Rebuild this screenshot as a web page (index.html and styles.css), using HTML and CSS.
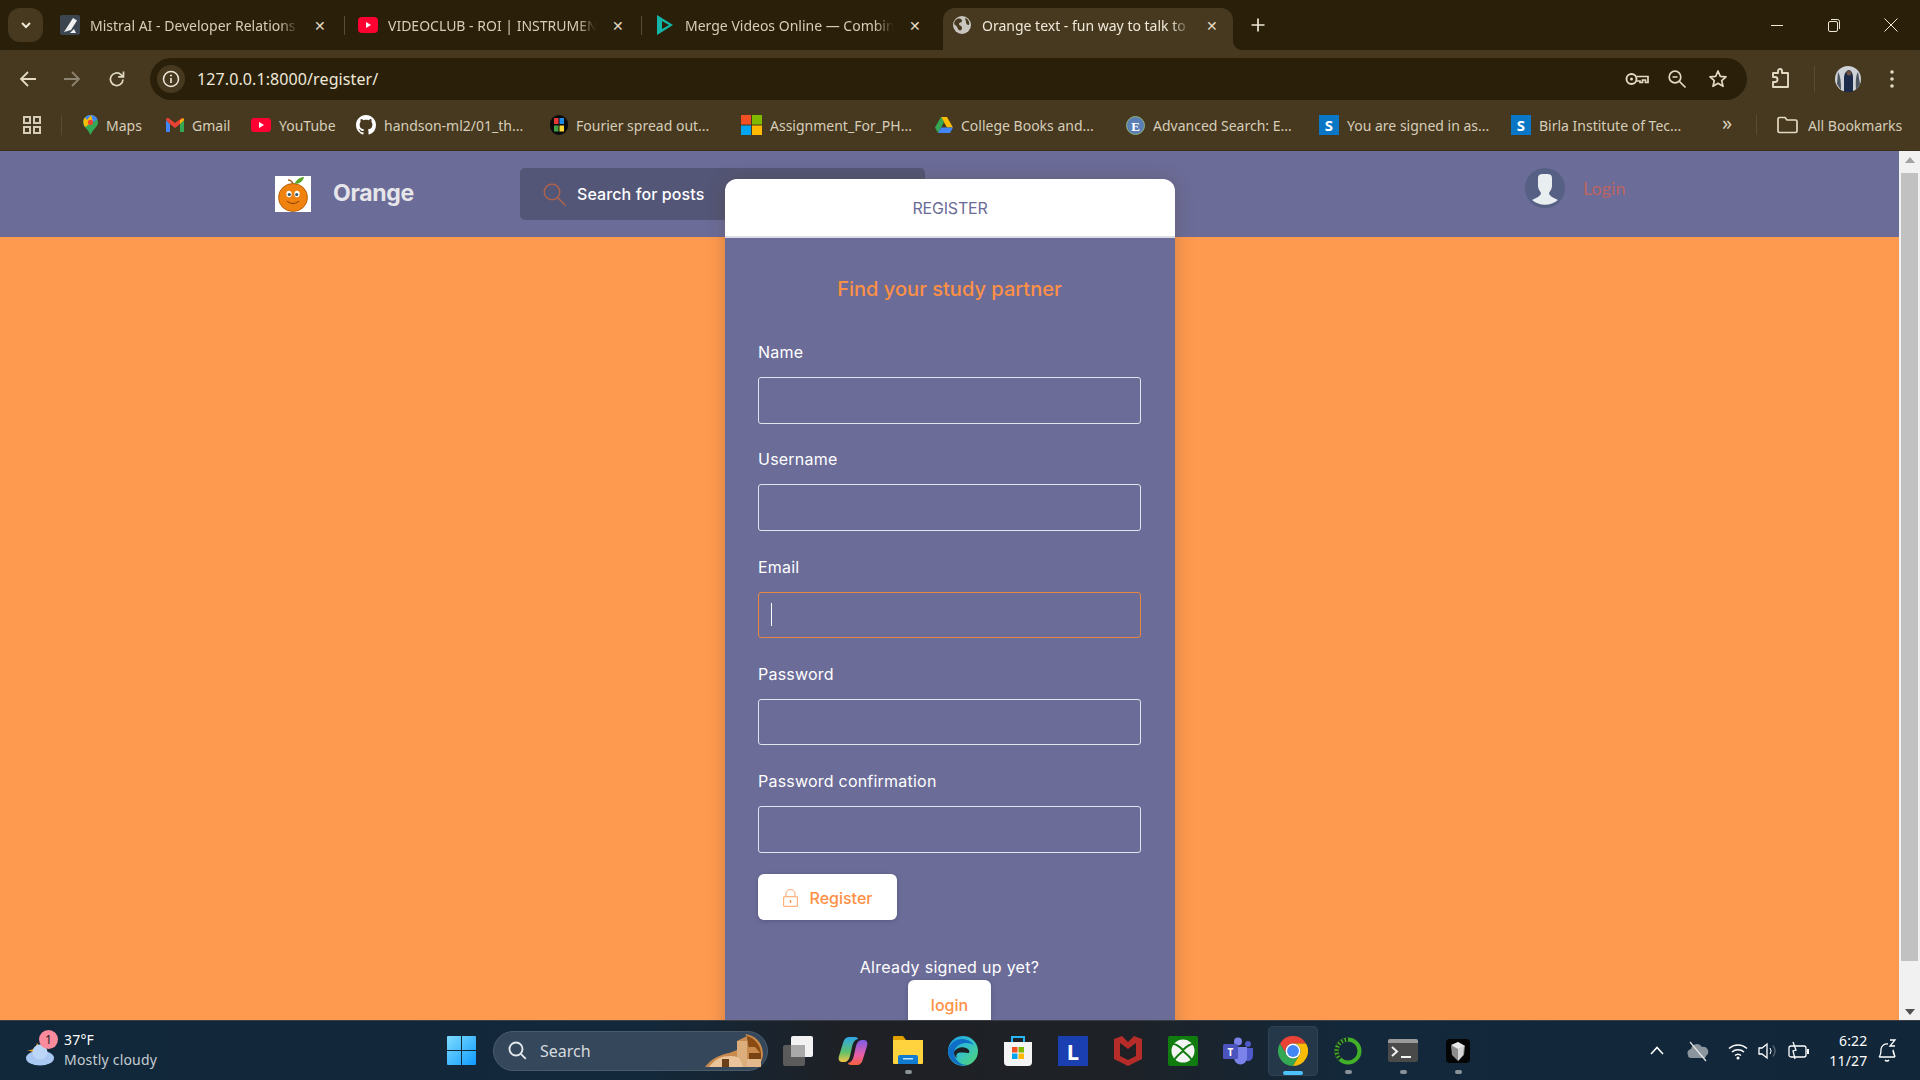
FILE: index.html
```html
<!DOCTYPE html>
<html lang="en">
<head>
<meta charset="utf-8">
<title>Orange text - fun way to talk to</title>
<link rel="stylesheet" href="styles.css">
</head>
<body>
<header class="chrome">
  <div class="tabstrip">
    <div class="tab-search"><svg width="12" height="12" viewBox="0 0 12 12"><path d="M2 4l4 4 4-4" fill="none" stroke="#efe8d8" stroke-width="2"/></svg></div>
    <div class="tab">
      <svg class="fav" width="20" height="20" viewBox="0 0 20 20"><rect width="20" height="20" rx="2" fill="#3b4651"/><path d="M4 17 13 3l4 2.500-6 9.500z" fill="#f1f1f1"/><path d="M10 18h6l-2-4z" fill="#f1f1f1"/></svg>
      <span class="tab-title">Mistral AI - Developer Relations</span>
      <span class="tab-x">✕</span>
    </div>
    <div class="tab tab-sep">
      <svg class="fav" width="20" height="20" viewBox="0 0 20 20"><rect y="2" width="20" height="16" rx="4" fill="#ff0033"/><path d="M8 7l5 3-5 3z" fill="#fff"/></svg>
      <span class="tab-title">VIDEOCLUB - ROI | INSTRUMEN</span>
      <span class="tab-x">✕</span>
    </div>
    <div class="tab tab-sep">
      <svg class="fav" width="20" height="22" viewBox="0 0 20 22"><path d="M2 1l16 10L2 21z" fill="#12b5a6"/><path d="M7 7l7 4-7 4z" fill="#2a200a"/></svg>
      <span class="tab-title">Merge Videos Online — Combin</span>
      <span class="tab-x">✕</span>
    </div>
    <div class="tab tab-active">
      <svg class="fav" width="18" height="18" viewBox="0 0 18 18"><circle cx="9" cy="9" r="9" fill="#c9c6c0"/><path d="M4 3c3-1 5 0 5 2s-3 1-3 3 3 1 3 4-3 3-4 1-1-3-3-4 0-5 2-6zM12 2c3 1 5 4 4 7-2 0-3-1-3-3s-1-2-1-4z" fill="#463920"/></svg>
      <span class="tab-title">Orange text - fun way to talk to</span>
      <span class="tab-x">✕</span>
    </div>
    <svg class="newtab" width="16" height="16" viewBox="0 0 16 16"><path d="M8 1.500v13M1.500 8h13" stroke="#efe8d8" stroke-width="1.700"/></svg>
    <div class="winctl">
      <svg width="14" height="14" viewBox="0 0 14 14"><path d="M1 7.500h12" stroke="#efe8d8"/></svg>
      <svg width="14" height="14" viewBox="0 0 14 14"><rect x="1.500" y="3.500" width="9" height="10" rx="1.500" fill="none" stroke="#efe8d8"/><path d="M4 1.500h6.500a2 2 0 0 1 2 2V11" fill="none" stroke="#efe8d8"/></svg>
      <svg width="14" height="14" viewBox="0 0 14 14"><path d="M.5.500l13 13M13.500.500l-13 13" stroke="#efe8d8"/></svg>
    </div>
  </div>

  <div class="toolbar">
    <div class="tool"><svg width="18" height="18" viewBox="0 0 18 18"><path d="M17 9H2.500M9 2 2 9l7 7" fill="none" stroke="#e3dac4" stroke-width="1.800"/></svg></div>
    <div class="tool"><svg width="18" height="18" viewBox="0 0 18 18"><path d="M1 9h14.500M9 2l7 7-7 7" fill="none" stroke="#8d8371" stroke-width="1.800"/></svg></div>
    <div class="tool tool-wide"><svg width="18" height="18" viewBox="0 0 18 18"><path d="M15 9.500A6.300 6.300 0 1 1 13 4.600L15 6.500M15.500 1.500v5.300h-5.300" fill="none" stroke="#e3dac4" stroke-width="1.700"/></svg></div>
    <div class="omnibox">
      <div class="site-info"><svg width="18" height="18" viewBox="0 0 18 18"><circle cx="9" cy="9" r="7.500" fill="none" stroke="#efe8d8" stroke-width="1.500"/><path d="M9 8v5" stroke="#efe8d8" stroke-width="1.600"/><circle cx="9" cy="5.500" r="1" fill="#efe8d8"/></svg></div>
      <span class="url">127.0.0.1:8000/register/</span>
      <div class="omni-actions">
        <div class="omni-act"><svg width="24" height="18" viewBox="0 0 24 18"><circle cx="6.500" cy="9" r="5" fill="none" stroke="#e3dac4" stroke-width="1.900"/><circle cx="6.500" cy="9" r="1.500" fill="#e3dac4"/><path d="M11.500 6.500h11.500v6h-2.500v-2.500h-3v2.500H15V11h-3.500" fill="none" stroke="#e3dac4" stroke-width="1.700"/></svg></div>
        <div class="omni-act"><svg width="20" height="20" viewBox="0 0 20 20"><circle cx="8" cy="8" r="5.800" fill="none" stroke="#e3dac4" stroke-width="1.700"/><path d="M12.500 12.500l6 6M5.500 8h5" stroke="#e3dac4" stroke-width="1.700"/></svg></div>
        <div class="omni-act"><svg width="20" height="20" viewBox="0 0 20 20"><path d="M10 2l2.300 5.300 5.700.500-4.300 3.800 1.300 5.700-5-3-5 3 1.300-5.700L2 7.800l5.700-.500z" fill="none" stroke="#e3dac4" stroke-width="1.700" stroke-linejoin="round"/></svg></div>
      </div>
    </div>
    <div class="tool tool-ext"><svg width="22" height="22" viewBox="0 0 22 22"><path d="M3 5h5V3a2 2 0 0 1 4 0v2h6v14H3v-5h2a2.500 2.500 0 0 0 0-5H3z" fill="none" stroke="#e3dac4" stroke-width="1.900" stroke-linejoin="round"/></svg></div>
    <span class="tool-sep"></span>
    <div class="avatar-slot"><svg width="26" height="26" viewBox="0 0 26 26"><circle cx="13" cy="13" r="13" fill="#cfd2d6"/><path d="M9 26V12c0-5 3-8 5-8s4 3 4 8v14z" fill="#1c2b4a"/><path d="M3 6c3 4 3 14 3 18L2 18zM23 6c-3 4-2 14-2 18l4-6z" fill="#4c5660"/><circle cx="14" cy="7" r="2.500" fill="#6d5040"/></svg></div>
    <div class="tool"><svg width="4" height="18" viewBox="0 0 4 18"><circle cx="2" cy="2" r="1.800" fill="#e3dac4"/><circle cx="2" cy="9" r="1.800" fill="#e3dac4"/><circle cx="2" cy="16" r="1.800" fill="#e3dac4"/></svg></div>
  </div>

  <nav class="bookmarks">
    <svg width="18" height="18" viewBox="0 0 18 18"><g fill="none" stroke="#d6cdb8" stroke-width="2"><rect x="1" y="1" width="6" height="6"/><rect x="11" y="1" width="6" height="6"/><rect x="1" y="11" width="6" height="6"/><rect x="11" y="11" width="6" height="6"/></g></svg>
    <span class="bm-sep"></span>
    <span class="bm"><svg width="15" height="20" viewBox="0 0 15 20"><path d="M7.500 0C3.400 0 0 3.200 0 7.300 0 12 5 14 7.500 20 10 14 15 12 15 7.300 15 3.200 11.600 0 7.500 0z" fill="#34a853"/><path d="M2 2.500 7.500 0c2 0 5 1 6.500 4L2 12C.5 9-.5 5 2 2.500z" fill="#fbbc04"/><path d="M2 2.500C4 .5 6 0 8 0l-4 5z" fill="#4285f4"/><path d="M8 0c3 0 5 1.500 6.500 4.500L10 7z" fill="#4285f4"/><circle cx="7.500" cy="7.300" r="2.600" fill="#ea4335"/></svg>Maps</span>
    <span class="bm"><svg width="18" height="14" viewBox="0 0 18 14"><path d="M0 2v12h4V6z" fill="#4285f4"/><path d="M18 2v12h-4V6z" fill="#34a853"/><path d="M0 2c0-2 2-2.500 3-1.500L9 5l6-4.500c1-1 3-.5 3 1.500l-4 4-5 4-5-4z" fill="#ea4335"/><path d="M14 6l4-4c0-1-.5-1.500-1-1.700L14 2.500z" fill="#fbbc04"/></svg>Gmail</span>
    <span class="bm"><svg width="20" height="14" viewBox="0 0 20 14"><rect width="20" height="14" rx="3.500" fill="#ff0033"/><path d="M8 4l5 3-5 3z" fill="#fff"/></svg>YouTube</span>
    <span class="bm"><svg width="20" height="20" viewBox="0 0 16 16"><path fill="#fff" d="M8 0C3.580 0 0 3.580 0 8c0 3.540 2.290 6.530 5.470 7.590.4.070.55-.17.55-.38 0-.19-.01-.82-.01-1.490-2.010.37-2.530-.49-2.690-.94-.09-.23-.48-.94-.82-1.130-.28-.15-.68-.52-.01-.53.630-.01 1.080.58 1.230.82.720 1.210 1.870.87 2.330.66.070-.52.280-.87.510-1.070-1.780-.2-3.640-.89-3.640-3.950 0-.87.310-1.590.820-2.150-.08-.2-.36-1.020.08-2.120 0 0 .670-.21 2.200.82.640-.18 1.320-.27 2-.27.680 0 1.360.09 2 .27 1.530-1.040 2.200-.82 2.200-.82.440 1.100.160 1.920.080 2.120.510.560.820 1.270.820 2.150 0 3.070-1.870 3.750-3.650 3.950.29.250.54.730.54 1.480 0 1.070-.01 1.930-.01 2.200 0 .21.150.46.550.38A8.013 8.013 0 0 0 16 8c0-4.420-3.580-8-8-8z"/></svg>handson-ml2/01_th...</span>
    <span class="bm"><svg width="18" height="20" viewBox="0 0 18 20"><rect width="18" height="20" rx="9" fill="#0b0b0b"/><rect x="4" y="3" width="4.500" height="6" fill="#e53935"/><rect x="9.500" y="3" width="4.500" height="6" fill="#1e88e5"/><rect x="4" y="10.500" width="4.500" height="6" fill="#43a047"/><rect x="9.500" y="10.500" width="4.500" height="6" fill="#fdd835"/></svg>Fourier spread out...</span>
    <span class="bm"><svg width="21" height="20" viewBox="0 0 21 20"><rect width="10" height="9.500" fill="#f25022"/><rect x="11" width="10" height="9.500" fill="#7fba00"/><rect y="10.500" width="10" height="9.500" fill="#00a4ef"/><rect x="11" y="10.500" width="10" height="9.500" fill="#ffb900"/></svg>Assignment_For_PH...</span>
    <span class="bm"><svg width="18" height="16" viewBox="0 0 18 16"><path d="M6 0h6l6 10.500h-6z" fill="#fbbc04"/><path d="M6 0l3 5.300L3 16 0 10.500z" fill="#34a853"/><path d="M3 16l3-5.500h12L15 16z" fill="#4285f4"/></svg>College Books and...</span>
    <span class="bm"><span class="bm-e">E</span>Advanced Search: E...</span>
    <span class="bm"><span class="bm-s">S</span>You are signed in as...</span>
    <span class="bm"><span class="bm-s">S</span>Birla Institute of Tec...</span>
    <span class="bm-more">»</span>
    <span class="bm-sep"></span>
    <span class="bm bm-all"><svg width="21" height="18" viewBox="0 0 21 18"><path d="M1 3a1.500 1.500 0 0 1 1.500-1.500H8l2 2.500h8.500A1.500 1.500 0 0 1 20 5.500V15a1.500 1.500 0 0 1-1.500 1.500h-16A1.500 1.500 0 0 1 1 15z" fill="none" stroke="#e3dac4" stroke-width="1.700"/></svg>All Bookmarks</span>
  </nav>
</header>

<div class="viewport">
  <div class="page">
    <div class="site-nav">
      <svg class="logo" width="36" height="36" viewBox="0 0 36 36">
        <rect width="36" height="36" fill="#fff"/>
        <ellipse cx="18" cy="21.500" rx="14.500" ry="14" fill="#f0820f"/>
        <ellipse cx="18" cy="21.500" rx="14.500" ry="14" fill="none" stroke="#a85408" stroke-width=".8"/>
        <path d="M20 7c2-4 6-6 9-6-1 4-4 7-9 7z" fill="#5aa82a"/>
        <path d="M13 4c2 0 4 1 5 4" fill="none" stroke="#a5641e" stroke-width="1.500"/>
        <ellipse cx="14" cy="18" rx="2.600" ry="3.200" fill="#fff"/><ellipse cx="22" cy="18" rx="2.600" ry="3.200" fill="#fff"/>
        <circle cx="14.300" cy="18.500" r="1.600" fill="#24566a"/><circle cx="21.700" cy="18.500" r="1.600" fill="#24566a"/>
        <path d="M12 25c3 3.500 9 3.500 12 0" fill="none" stroke="#8b4208" stroke-width="1.100"/>
      </svg>
      <span class="brand">Orange</span>
      <div class="site-search">
        <svg width="23" height="23" viewBox="0 0 23 23"><circle cx="9" cy="9" r="7.800" fill="none" stroke="#b4644a" stroke-width="1.300"/><path d="M14.500 14.500l8 8" stroke="#b4644a" stroke-width="1.300"/></svg>
        <span>Search for posts</span>
      </div>
      <svg class="user-pic" width="40" height="40" viewBox="0 0 40 40"><circle cx="20" cy="20" r="20" fill="#566084"/><path d="M13 10c0-4 3-4 7-4s7 0 7 4v8c0 3-2 5-3 7 0 3 5 5 9 7a20 20 0 0 1-26 0c4-2 9-4 9-7-1-2-3-4-3-7z" fill="#e9eff0"/></svg>
      <a class="login-link">Login</a>
    </div>

    <main class="card">
      <div class="card-head">REGISTER</div>
      <form class="card-body">
        <h2 class="card-title">Find your study partner</h2>
        <div class="fields">
          <div class="field"><label>Name</label><input type="text"></div>
          <div class="field"><label>Username</label><input type="text"></div>
          <div class="field field-focus"><label>Email</label><input type="text" class="input-focus"></div>
          <div class="field"><label>Password</label><input type="password"></div>
          <div class="field"><label>Password confirmation</label><input type="password"></div>
        </div>
        <div class="btn btn-register">
          <svg width="15" height="18" viewBox="0 0 15 18"><path d="M3 8V5a4.500 4.500 0 0 1 9 0v3" fill="none" stroke="#ffb27e" stroke-width="1.200"/><rect x=".6" y="7.600" width="13.800" height="9.800" rx="1" fill="none" stroke="#ffb27e" stroke-width="1.200"/><rect x="6.800" y="11" width="1.400" height="3" fill="#ff8f45"/></svg>
          Register
        </div>
        <p class="already">Already signed up yet?</p>
        <div class="btn btn-login">login</div>
      </form>
    </main>
  </div>
  <div class="scrollbar">
    <span class="arrow-up"></span>
    <span class="thumb"></span>
    <span class="arrow-down"></span>
  </div>
</div>

<footer class="taskbar">
  <div class="weather">
    <div class="weather-icon">
      <svg width="30" height="30" viewBox="0 0 30 30"><path d="M1 14c5 1 10-1 11-7 3 3 3 8 0 10z" fill="#f0a020"/><ellipse cx="15" cy="22" rx="14" ry="7.500" fill="#a9c8f2"/><circle cx="15" cy="16" r="7.500" fill="#bcd6f7"/></svg>
      <span class="badge">1</span>
    </div>
    <div class="weather-text"><span class="temp">37°F</span><span class="cond">Mostly cloudy</span></div>
  </div>
  <svg class="winlogo" width="29" height="29" viewBox="0 0 29 29"><defs><linearGradient id="wg" x1="0" y1="0" x2="1" y2="1"><stop offset="0" stop-color="#7fdcff"/><stop offset="1" stop-color="#0f9bff"/></linearGradient></defs><path d="M0 1a1 1 0 0 1 1-1h13v14H0zM15 0h13a1 1 0 0 1 1 1v13H15zM0 15h14v14H1a1 1 0 0 1-1-1zM15 15h14v13a1 1 0 0 1-1 1H15z" fill="url(#wg)"/></svg>
  <div class="task-search">
    <svg width="19" height="19" viewBox="0 0 19 19"><circle cx="8" cy="8" r="6.500" fill="none" stroke="#e4e8ec" stroke-width="1.900"/><path d="M12.800 12.800l5 5" stroke="#e4e8ec" stroke-width="1.900"/></svg>
    <span>Search</span>
    <svg class="widget" width="60" height="36" viewBox="0 0 60 36"><path d="M0 34c6-8 14-12 24-14l8-3V8l10-5 2 12c2-6 0-10-4-14 10 1 18 9 18 20 0 6-4 13-8 13z" fill="#c98b4d"/><path d="M42 3c8 2 14 10 14 18L50 14 44 14z" fill="#8a4a12"/><rect x="32" y="8" width="10" height="26" fill="#dcae7c"/><path d="M4 34c6-8 12-11 22-11s10 5 12 11z" fill="#eac49a"/><rect x="17" y="26" width="7" height="8" fill="#6b3f17"/><path d="M44 20h12v14H44z" fill="#7a4313"/><path d="M42 26h14v8H42z" fill="#e3b88c"/></svg>
  </div>
  <div class="apps">
    <div class="app"><svg width="30" height="30" viewBox="0 0 30 30"><rect y="9" width="22" height="21" rx="2" fill="#5b5b5b"/><rect x="8" width="22" height="21" rx="2" fill="#f2f2f2"/><rect x="8" y="9" width="14" height="12" fill="#a9a9a9"/></svg></div>
    <div class="app"><svg width="30" height="30" viewBox="0 0 30 30"><defs><linearGradient id="c1" x1="0" y1="0" x2="0" y2="1"><stop offset="0" stop-color="#2ea7e8"/><stop offset=".6" stop-color="#5ec16a"/><stop offset="1" stop-color="#f6c445"/></linearGradient><linearGradient id="c2" x1="0" y1="0" x2="0" y2="1"><stop offset="0" stop-color="#7c5ce6"/><stop offset=".6" stop-color="#e75fa8"/><stop offset="1" stop-color="#f5603a"/></linearGradient></defs><path d="M11 1h6c2 0 3 1 3 2-4 1-5 4-6 8l-2 9c-1 4-3 6-6 6H4c-3 0-4-3-3-6l4-13c1-4 3-6 6-6z" fill="url(#c1)"/><path d="M19 29h-6c-2 0-3-1-3-2 4-1 5-4 6-8l2-9c1-4 3-6 6-6h2c3 0 4 3 3 6l-4 13c-1 4-3 6-6 6z" fill="url(#c2)"/></svg></div>
    <div class="app"><svg width="30" height="30" viewBox="0 0 30 30"><path d="M0 1a1 1 0 0 1 1-1h9l3 4H0z" fill="#e0a100"/><path d="M0 4h30v23a1 1 0 0 1-1 1H1a1 1 0 0 1-1-1z" fill="#ffd33d"/><path d="M5 21a2 2 0 0 1 2-2h16a2 2 0 0 1 2 2v7H5z" fill="#0f7cd1"/><rect x="10" y="22" width="10" height="1.500" fill="#bfe3ff"/></svg><span class="dot"></span></div>
    <div class="app"><svg width="30" height="30" viewBox="0 0 30 30"><defs><linearGradient id="e1" x1="0" y1="0" x2="1" y2="1"><stop offset="0" stop-color="#1b9de2"/><stop offset=".5" stop-color="#35c1c8"/><stop offset="1" stop-color="#52d66a"/></linearGradient></defs><circle cx="15" cy="15" r="15" fill="url(#e1)"/><path d="M0 15C1 8 7 3 14 3c5 0 9 2 12 6-4-2-10-3-15 0-5 3-6 9-3 14 2 3 6 6 11 6a15 15 0 0 1-19-14z" fill="#0f6fc6"/><path d="M6 16c2-4 8-6 12-4 3 1 4 3 3 5-3 0-8-1-11 0-2 1-2 3-1 5-2-1-3-3-3-6z" fill="#1c2024"/></svg></div>
    <div class="app"><svg width="30" height="30" viewBox="0 0 30 30"><path d="M9 6V1h12v5" fill="none" stroke="#29b6f6" stroke-width="2"/><path d="M1 6h28v20a4 4 0 0 1-4 4H5a4 4 0 0 1-4-4z" fill="#f4f4f4"/><rect x="9" y="11" width="5.500" height="5.500" fill="#f25022"/><rect x="15.500" y="11" width="5.500" height="5.500" fill="#7fba00"/><rect x="9" y="17.500" width="5.500" height="5.500" fill="#00a4ef"/><rect x="15.500" y="17.500" width="5.500" height="5.500" fill="#ffb900"/></svg></div>
    <div class="app"><span class="app-l">L</span></div>
    <div class="app"><svg width="28" height="30" viewBox="0 0 28 30"><path d="M0 3l8-3 6 6 6-6 8 3v20l-14 7-14-7z" fill="#b62c29"/><path d="M6 7l8 6 8-6v13l-8 4-8-4z" fill="#1e2024"/></svg></div>
    <div class="app"><svg width="30" height="30" viewBox="0 0 30 30"><rect width="30" height="30" rx="2" fill="#107c10"/><circle cx="15" cy="15" r="11.500" fill="#f4f4f4"/><path d="M5 8c4 0 7 3 10 6 3-3 6-6 10-6M6 25c1-4 6-7 9-10 3 3 8 6 9 10" fill="none" stroke="#107c10" stroke-width="2"/></svg></div>
    <div class="app"><svg width="30" height="28" viewBox="0 0 30 28"><circle cx="15" cy="4.500" r="4" fill="#7b83eb"/><circle cx="25" cy="7" r="3" fill="#5059c9"/><path d="M19 11h11v8a5 5 0 0 1-8 4z" fill="#5059c9"/><path d="M10 10h14v11a6.500 6.500 0 0 1-13 0z" fill="#7b83eb"/><rect y="7" width="15" height="15" rx="1.500" fill="#4b53bc"/><text x="7.500" y="19" class="teams-t">T</text></svg></div>
    <div class="app app-active"><svg width="30" height="30" viewBox="0 0 48 48"><path d="M24 12h20.800A24 24 0 0 0 3.200 12l10.400 18A12 12 0 0 1 24 12z" fill="#ea4335"/><path d="M13.600 30 3.200 12A24 24 0 0 0 24 48l10.400-18a12 12 0 0 1-20.800 0z" fill="#34a853"/><path d="M34.400 30 24 48A24 24 0 0 0 44.800 12H24a12 12 0 0 1 10.400 18z" fill="#fbbc04"/><circle cx="24" cy="24" r="12" fill="#fff"/><circle cx="24" cy="24" r="9.500" fill="#4285f4"/></svg><span class="bar"></span></div>
    <div class="app"><svg width="28" height="28" viewBox="0 0 28 28"><circle cx="14" cy="14" r="11.500" fill="none" stroke="#43b02a" stroke-width="4"/><path d="M14 2.500A11.500 11.500 0 0 0 7 23" fill="none" stroke="#1e2a24" stroke-width="4" stroke-dasharray="2 1.500"/></svg><span class="dot"></span></div>
    <div class="app"><svg width="30" height="23" viewBox="0 0 30 23"><rect width="30" height="23" rx="2" fill="#4a4a4a"/><path d="M0 2a2 2 0 0 1 2-2h26a2 2 0 0 1 2 2v2H0z" fill="#9a9a9a"/><path d="M4 8l5 4.500-5 4.500" fill="none" stroke="#f2f2f2" stroke-width="2"/><rect x="13" y="17" width="10" height="2" fill="#f2f2f2"/></svg><span class="dot"></span></div>
    <div class="app"><svg width="24" height="24" viewBox="0 0 24 24"><rect width="24" height="24" rx="4" fill="#050505"/><path d="M12 3l7 4-1 9-6 6-6-6-1-9z" fill="#8c8c8c"/><path d="M12 3l7 4-7 3-7-4z" fill="#e8e8e8"/><path d="M12 10l6-3-1 9-5 6z" fill="#d6d6d6"/></svg><span class="dot"></span></div>
  </div>
  <div class="tray">
    <svg width="14" height="9" viewBox="0 0 14 9"><path d="M1 8l6-6.500L13 8" fill="none" stroke="#fff" stroke-width="1.600"/></svg>
    <svg class="tray-cloud" width="22" height="22" viewBox="0 0 22 22"><path d="M1 15a4 4 0 0 1 3-6 6 6 0 0 1 11-2 5 5 0 0 1 4 9l-1 2H4a3 3 0 0 1-3-3z" fill="#8a959e"/><path d="M3 2l16 19" stroke="#e8e8e8" stroke-width="1.200"/></svg>
    <svg class="tray-wifi" width="20" height="18" viewBox="0 0 20 18"><g fill="none" stroke="#fff" stroke-width="1.500"><path d="M1 6.500a13 13 0 0 1 18 0"/><path d="M4 10a9 9 0 0 1 12 0"/><path d="M7 13.500a4.500 4.500 0 0 1 6 0"/></g><circle cx="10" cy="16" r="1.500" fill="#fff"/></svg>
    <svg class="tray-vol" width="20" height="18" viewBox="0 0 20 18"><path d="M1 6h3l5-4v14l-5-4H1z" fill="none" stroke="#fff" stroke-width="1.300"/><path d="M12 6a5 5 0 0 1 0 6" fill="none" stroke="#fff"/><path d="M15 3.500a9 9 0 0 1 0 11" fill="none" stroke="#777f88"/></svg>
    <svg class="tray-bat" width="22" height="20" viewBox="0 0 22 20"><rect x="1" y="5" width="17" height="11" rx="2" fill="none" stroke="#fff" stroke-width="1.300"/><rect x="19" y="8" width="2" height="5" fill="#fff"/><path d="M5 1l3 8-3 1 2 8" fill="none" stroke="#fff" stroke-width="1.300"/></svg>
    <div class="clock"><span>6:22</span><span>11/27</span></div>
    <svg class="tray-bell" width="20" height="24" viewBox="0 0 20 24"><path d="M2 18c2-2 2-4 2-8a6 6 0 0 1 7-5M16 11c0 3 1 5 2 7zM2 18h16M8 21a2.500 2.500 0 0 0 4 0" fill="none" stroke="#fff" stroke-width="1.300"/><path d="M13 1h5l-5 6h5" fill="none" stroke="#fff" stroke-width="1.300"/></svg>
  </div>
</footer>
</body>
</html>
```

FILE: styles.css
```css
* { box-sizing: border-box; }
html, body { margin: 0; height: 100%; }
body {
  display: flex;
  flex-direction: column;
  height: 1080px;
  overflow: hidden;
  font-family: "Inter", "Liberation Sans", sans-serif;
  background: #463920;
}

/* browser chrome */
.chrome { flex: none; height: 151px; background: #463920; font-family: "Noto Sans", "Open Sans", sans-serif; border-bottom: 1px solid #3b3019; }
.tabstrip { display: flex; align-items: flex-end; height: 50px; background: #2a200a; padding-left: 8px; position: relative; }
.tab-search { width: 35px; height: 34px; margin-bottom: 8px; margin-right: 4px; border-radius: 12px; background: #463920; display: flex; align-items: center; justify-content: center; }
.tab { width: 297px; height: 42px; flex: none; display: flex; align-items: center; padding: 0 0 8px 13px; color: #d6cdb8; font-size: 14px; position: relative; }
.tab-sep { padding-left: 14px; }
.tab-sep::before { content: ""; position: absolute; left: 0; top: 8px; height: 19px; width: 1px; background: #5a4c30; }
.tab .fav { flex: none; }
.tab-title { flex: none; width: 215px; margin-left: 10px; overflow: hidden; white-space: nowrap; -webkit-mask-image: linear-gradient(90deg, #000 88%, transparent 97%); mask-image: linear-gradient(90deg, #000 88%, transparent 97%); }
.tab-x { flex: none; margin-left: 7px; font-size: 14px; color: #e3dac4; width: 16px; text-align: center; }
.tab-active { width: 290px; margin-left: 5px; padding-left: 10px; background: #463920; border-radius: 12px 12px 0 0; color: #efe8d8; }
.tab-active .tab-title { margin-left: 11px; }
.tab-active::after { content: ""; position: absolute; right: -10px; bottom: 0; width: 10px; height: 10px; background: radial-gradient(circle at 100% 0, transparent 10px, #463920 10.500px); }
.newtab { margin: 0 0 17px 17px; }
.winctl { display: flex; margin-left: auto; margin-bottom: 18px; margin-right: 22px; gap: 43px; }

.toolbar { display: flex; align-items: flex-end; height: 50px; padding-left: 6px; background: #463920; border-radius: 8px 8px 0 0; }
.tool { width: 44px; height: 42px; flex: none; display: flex; align-items: center; justify-content: center; }
.tool-wide { width: 46px; margin-right: 10px; }
.tool-ext { margin-left: 12px; }
.tool-sep { width: 1px; height: 26px; margin: 0 13px 8px 11px; background: #5a4c30; }
.avatar-slot { width: 40px; height: 42px; flex: none; display: flex; align-items: center; justify-content: center; margin-right: 2px; }
.omnibox { width: 1597px; height: 42px; flex: none; border-radius: 21px; background: #2a200a; display: flex; align-items: center; padding: 0 9px 0 7px; color: #efe8d8; }
.site-info { width: 28px; height: 28px; border-radius: 50%; background: #463920; display: flex; align-items: center; justify-content: center; }
.url { margin-left: 12px; font-size: 16px; letter-spacing: .1px; }
.omni-actions { margin-left: auto; display: flex; }
.omni-act { width: 40.500px; display: flex; justify-content: center; align-items: center; }

.bookmarks { display: grid; grid-template-columns: 38px 22px 83px 85px 105px 194px 191px 194px 191px 193px 192px 211px 34px 21px auto; align-items: center; height: 50px; padding-left: 23px; font-size: 14px; color: #d6cdb8; white-space: nowrap; }
.bm { display: flex; align-items: center; gap: 8px; }
.bm-sep { width: 1px; height: 20px; background: #5a4c30; }
.bm-more { font-size: 20px; line-height: 20px; margin-bottom: 4px; }
.bm-all { gap: 10px; }
.bm-e { width: 19px; height: 19px; border-radius: 50%; background: #5b7fb5; color: #fff; font: bold 13px/19px "Liberation Serif", serif; text-align: center; border: 1px solid #8fb27a; }
.bm-s { width: 20px; height: 20px; background: #0a76c6; color: #fff; font: bold 15px/20px "Noto Sans", sans-serif; text-align: center; }

/* page */
.viewport { flex: 1; min-height: 0; display: flex; }
.page { flex: 1; min-width: 0; background: #fe9a4f; overflow: hidden; }
.site-nav { height: 86px; background: #6b6c98; display: flex; align-items: center; padding-left: 275px; }
.logo { flex: none; }
.brand { width: 187px; margin: 0 0 2px 22px; font-size: 23px; font-weight: 700; color: #e6e6ea; flex: none; letter-spacing: -.3px; }
.site-search { width: 405px; height: 52px; flex: none; border-radius: 5px; background: #535676; display: flex; align-items: center; padding-left: 23px; gap: 11px; color: #fff; font-size: 16px; font-weight: 500; letter-spacing: .1px; }
.user-pic { flex: none; margin: 0 0 12px 600px; }
.login-link { margin: 0 0 12px 18px; font-family: "Lato", sans-serif; font-size: 18px; color: #bb6465; }

.card { width: 450px; margin: -58px 0 0 725px; background: #6b6c98; border-radius: 12px 12px 0 0; box-shadow: 0 0 18px rgba(90, 60, 40, .28); position: relative; }
.card-head { height: 59px; background: #fff; border-radius: 12px 12px 0 0; border-bottom: 2px solid #dcdce4; color: #6b6c98; font-size: 16px; display: flex; align-items: center; justify-content: center; letter-spacing: -.2px; }
.card-body { padding: 36px 34px 60px 33px; height: 900px; }
.card-title { margin: 0 0 36px; font-size: 20px; line-height: 30px; font-weight: 500; color: #fe9045; text-align: center; letter-spacing: .02px; }
.fields { display: grid; gap: 23.750px; }
.field { display: grid; gap: 13px; position: relative; }
.field label { font-size: 16px; line-height: 24px; color: #fff; letter-spacing: .22px; }
.field input { width: 100%; height: 46.500px; padding: 0 12px; background: transparent; border: 1px solid #e4e4ee; border-radius: 3px; caret-color: transparent; outline: none; }
.field input.input-focus { border-color: #e8873f; }
.field-focus::after { content: ""; position: absolute; left: 13px; top: 48px; width: 1px; height: 23px; background: #fff; }
.btn { background: #fff; color: #fe9045; font-size: 16px; font-weight: 500; letter-spacing: 0; border-radius: 6px; display: flex; align-items: center; justify-content: center; box-shadow: 0 1px 4px rgba(40, 40, 80, .3); }
.btn-register { width: 139px; height: 46px; margin-top: 21.500px; gap: 12px; padding-top: 1px; }
.already { margin: 35px 0 1px; font-size: 16px; line-height: 24px; color: #fff; text-align: center; letter-spacing: .3px; }
.btn-login { width: 83px; height: 50px; margin: 0 auto; }

.scrollbar { width: 21px; flex: none; background: #f1f1f1; display: flex; flex-direction: column; align-items: center; padding: 6px 0 5px; }
.arrow-up { width: 0; height: 0; border: 5px solid transparent; border-top: 0; border-bottom: 6px solid #a3a3a3; }
.arrow-down { width: 0; height: 0; border: 5px solid transparent; border-bottom: 0; border-top: 6px solid #505050; margin-top: auto; }
.thumb { width: 17px; height: 788px; margin-top: 10px; background: #c1c1c1; }

/* taskbar */
.taskbar { flex: none; height: 60px; display: flex; align-items: center; border-top: 1px solid #3a3e42; font-family: "Noto Sans", "Open Sans", sans-serif; color: #fff; background: linear-gradient(90deg, #11283a 0, #13283a 34%, #1e2025 44%, #1e2126 58%, #13283a 70%, #112739 100%); }
.weather { width: 447px; flex: none; display: flex; align-items: center; padding-left: 25px; gap: 9px; }
.weather-icon { position: relative; width: 30px; height: 30px; }
.badge { position: absolute; right: -3px; top: -6px; width: 19px; height: 19px; border-radius: 50%; background: #f98b9c; color: #222; font-size: 12px; line-height: 19px; text-align: center; }
.weather-text { display: flex; flex-direction: column; font-size: 14px; line-height: 20px; letter-spacing: .2px; margin-bottom: 2px; }
.cond { color: #c6ccd1; }
.winlogo { flex: none; }
.task-search { width: 275px; height: 40px; margin-left: 17px; flex: none; border-radius: 20px; background: #35475a; border: 1px solid #4a5b6c; display: flex; align-items: center; padding-left: 14px; gap: 13px; font-size: 16px; color: #d5dade; }
.widget { margin-left: auto; margin-right: 2px; }
.apps { display: flex; margin-left: 2.500px; }
.app { width: 55px; height: 50px; flex: none; display: flex; align-items: center; justify-content: center; position: relative; border-radius: 5px; }
.app-active { background: #25384a; box-shadow: inset 0 0 0 1px #2f4255; width: 50px; margin: 0 2.500px; }
.dot { position: absolute; left: 50%; bottom: 2px; width: 7px; height: 4px; margin-left: -3.500px; border-radius: 2px; background: #8a929a; }
.bar { position: absolute; left: 50%; bottom: 1px; width: 20px; height: 4px; margin-left: -10px; border-radius: 2px; background: #4cc2ff; }
.app-l { width: 30px; height: 30px; background: #1a3fb0; color: #fff; font: bold 22px/30px "Noto Sans", sans-serif; text-align: center; }
.teams-t { font: bold 10px "Noto Sans", sans-serif; fill: #fff; text-anchor: middle; }
.tray { display: flex; align-items: center; margin-left: 164px; flex: none; }
.tray-cloud { margin-left: 23px; }
.tray-wifi { margin-left: 19px; }
.tray-vol { margin-left: 10px; }
.tray-bat { margin-left: 10px; }
.clock { width: 47px; margin-left: 11px; display: flex; flex-direction: column; align-items: flex-end; font-size: 14px; line-height: 20px; letter-spacing: .2px; }
.tray-bell { margin-left: 9px; }
```
